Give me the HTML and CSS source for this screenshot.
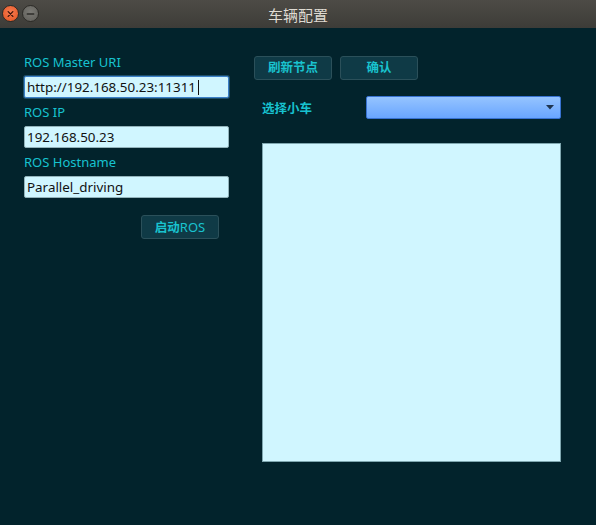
FILE: index.html
```html
<!DOCTYPE html>
<html lang="zh">
<head>
<meta charset="utf-8">
<title>车辆配置</title>
<link rel="stylesheet" href="styles.css">
</head>
<body>
<div class="window">
  <div class="titlebar">
    <div class="controls">
      <span class="wbtn close">
        <svg width="16" height="16" viewBox="0 0 16 16"><path d="M5.5 5.5 L10.5 10.5 M10.5 5.5 L5.5 10.5" stroke="#3a1208" stroke-width="1.4" stroke-linecap="round"/></svg>
      </span>
      <span class="wbtn minimize">
        <svg width="16" height="16" viewBox="0 0 16 16"><path d="M4.5 8 L11.5 8" stroke="#2e2d2a" stroke-width="1.4" stroke-linecap="round"/></svg>
      </span>
    </div>
    <div class="title">车辆配置</div>
  </div>
  <div class="content">
    <div class="left">
      <label class="lbl">ROS Master URI</label>
      <div class="input focused">http://192.168.50.23:11311<span class="caret"></span></div>
      <label class="lbl">ROS IP</label>
      <div class="input">192.168.50.23</div>
      <label class="lbl">ROS Hostname</label>
      <div class="input">Parallel_driving</div>
      <div class="btnrow">
        <button class="btn start">启动<span class="latin">ROS</span></button>
      </div>
    </div>
    <div class="right">
      <div class="toprow">
        <button class="btn">刷新节点</button>
        <button class="btn">确认</button>
      </div>
      <div class="selrow">
        <span class="sellbl">选择小车</span>
        <div class="combo">
          <svg width="10" height="6" viewBox="0 0 10 6"><path d="M1 1 L9 1 L5 5.5 Z" fill="#1f3550"/></svg>
        </div>
      </div>
      <div class="list"></div>
    </div>
  </div>
</div>
</body>
</html>
```
FILE: styles.css
```css
html, body {
  margin: 0;
  padding: 0;
  background: #02232c;
}
body {
  width: 596px;
  height: 525px;
  overflow: hidden;
  font-family: "Noto Sans", "Noto Sans CJK SC", sans-serif;
}
.window {
  width: 596px;
  height: 525px;
  display: flex;
  flex-direction: column;
}
.titlebar {
  height: 28px;
  background: linear-gradient(#4d4b46, #3d3c38);
  position: relative;
  display: flex;
  align-items: center;
  justify-content: center;
  flex-shrink: 0;
}
.controls {
  position: absolute;
  left: 2px;
  top: 5px;
  display: flex;
  gap: 3px;
}
.wbtn {
  width: 17px;
  height: 17px;
  border-radius: 50%;
  display: flex;
  align-items: center;
  justify-content: center;
  box-sizing: border-box;
}
.wbtn.close {
  background: radial-gradient(circle at 50% 40%, #f77c52, #e2531f);
  border: 1px solid #2c2b27;
}
.wbtn.minimize {
  background: radial-gradient(circle at 50% 40%, #7b7a75, #5e5d58);
  border: 1px solid #2c2b27;
}
.title {
  color: #dfdbd2;
  font-size: 15px;
  font-family: "Noto Sans CJK SC", sans-serif;
  line-height: 1;
}
.content {
  flex: 1;
  display: flex;
  padding: 28px 0 0 24px;
}
.left {
  width: 205px;
  display: flex;
  flex-direction: column;
}
.lbl {
  color: #17c2d0;
  font-size: 13px;
  line-height: 12px;
  height: 16px;
  margin-bottom: 4px;
}
.input {
  height: 22px;
  box-sizing: border-box;
  background: #d0f6ff;
  border: 1px solid #93b3bb;
  border-radius: 2px;
  color: #111;
  font-size: 13.4px;
  line-height: 20px;
  padding-left: 2px;
  margin-bottom: 8px;
  display: flex;
  align-items: center;
  white-space: nowrap;
}
.input.focused {
  border: 1px solid #3b80c8;
  box-shadow: 0 0 0 1px #1d4f6a;
}
.caret {
  display: inline-block;
  width: 1px;
  height: 15px;
  background: #111;
  margin-left: 2px;
}
.btnrow {
  display: flex;
  justify-content: flex-end;
  padding-right: 10px;
  margin-top: 9px;
}
.btn {
  width: 78px;
  height: 24px;
  box-sizing: border-box;
  background: #0f3a46;
  border: 1px solid #2b505a;
  border-radius: 3px;
  color: #19c3cf;
  font-family: "Noto Sans", "Noto Sans CJK SC", sans-serif;
  font-size: 12.5px;
  font-weight: bold;
  padding: 0;
  line-height: 22px;
}
.latin {
  font-weight: normal;
  font-size: 13px;
}
.right {
  margin-left: 25px;
  display: flex;
  flex-direction: column;
}
.toprow {
  display: flex;
  gap: 8px;
}
.selrow {
  display: flex;
  align-items: center;
  margin-top: 16px;
  height: 22px;
}
.sellbl {
  color: #17c2d0;
  font-size: 12.5px;
  font-weight: bold;
  width: 104px;
  padding-left: 8px;
}
.combo {
  width: 195px;
  height: 23px;
  box-sizing: border-box;
  background: linear-gradient(#95c4ff, #69a5ff);
  border: 1px solid #3872d2;
  border-radius: 2px;
  display: flex;
  align-items: center;
  justify-content: flex-end;
  padding-right: 5px;
}
.list {
  margin-left: 8px;
  margin-top: 25px;
  width: 299px;
  height: 319px;
  box-sizing: border-box;
  background: #d0f6ff;
  border: 1px solid #7fa7b0;
}
```
